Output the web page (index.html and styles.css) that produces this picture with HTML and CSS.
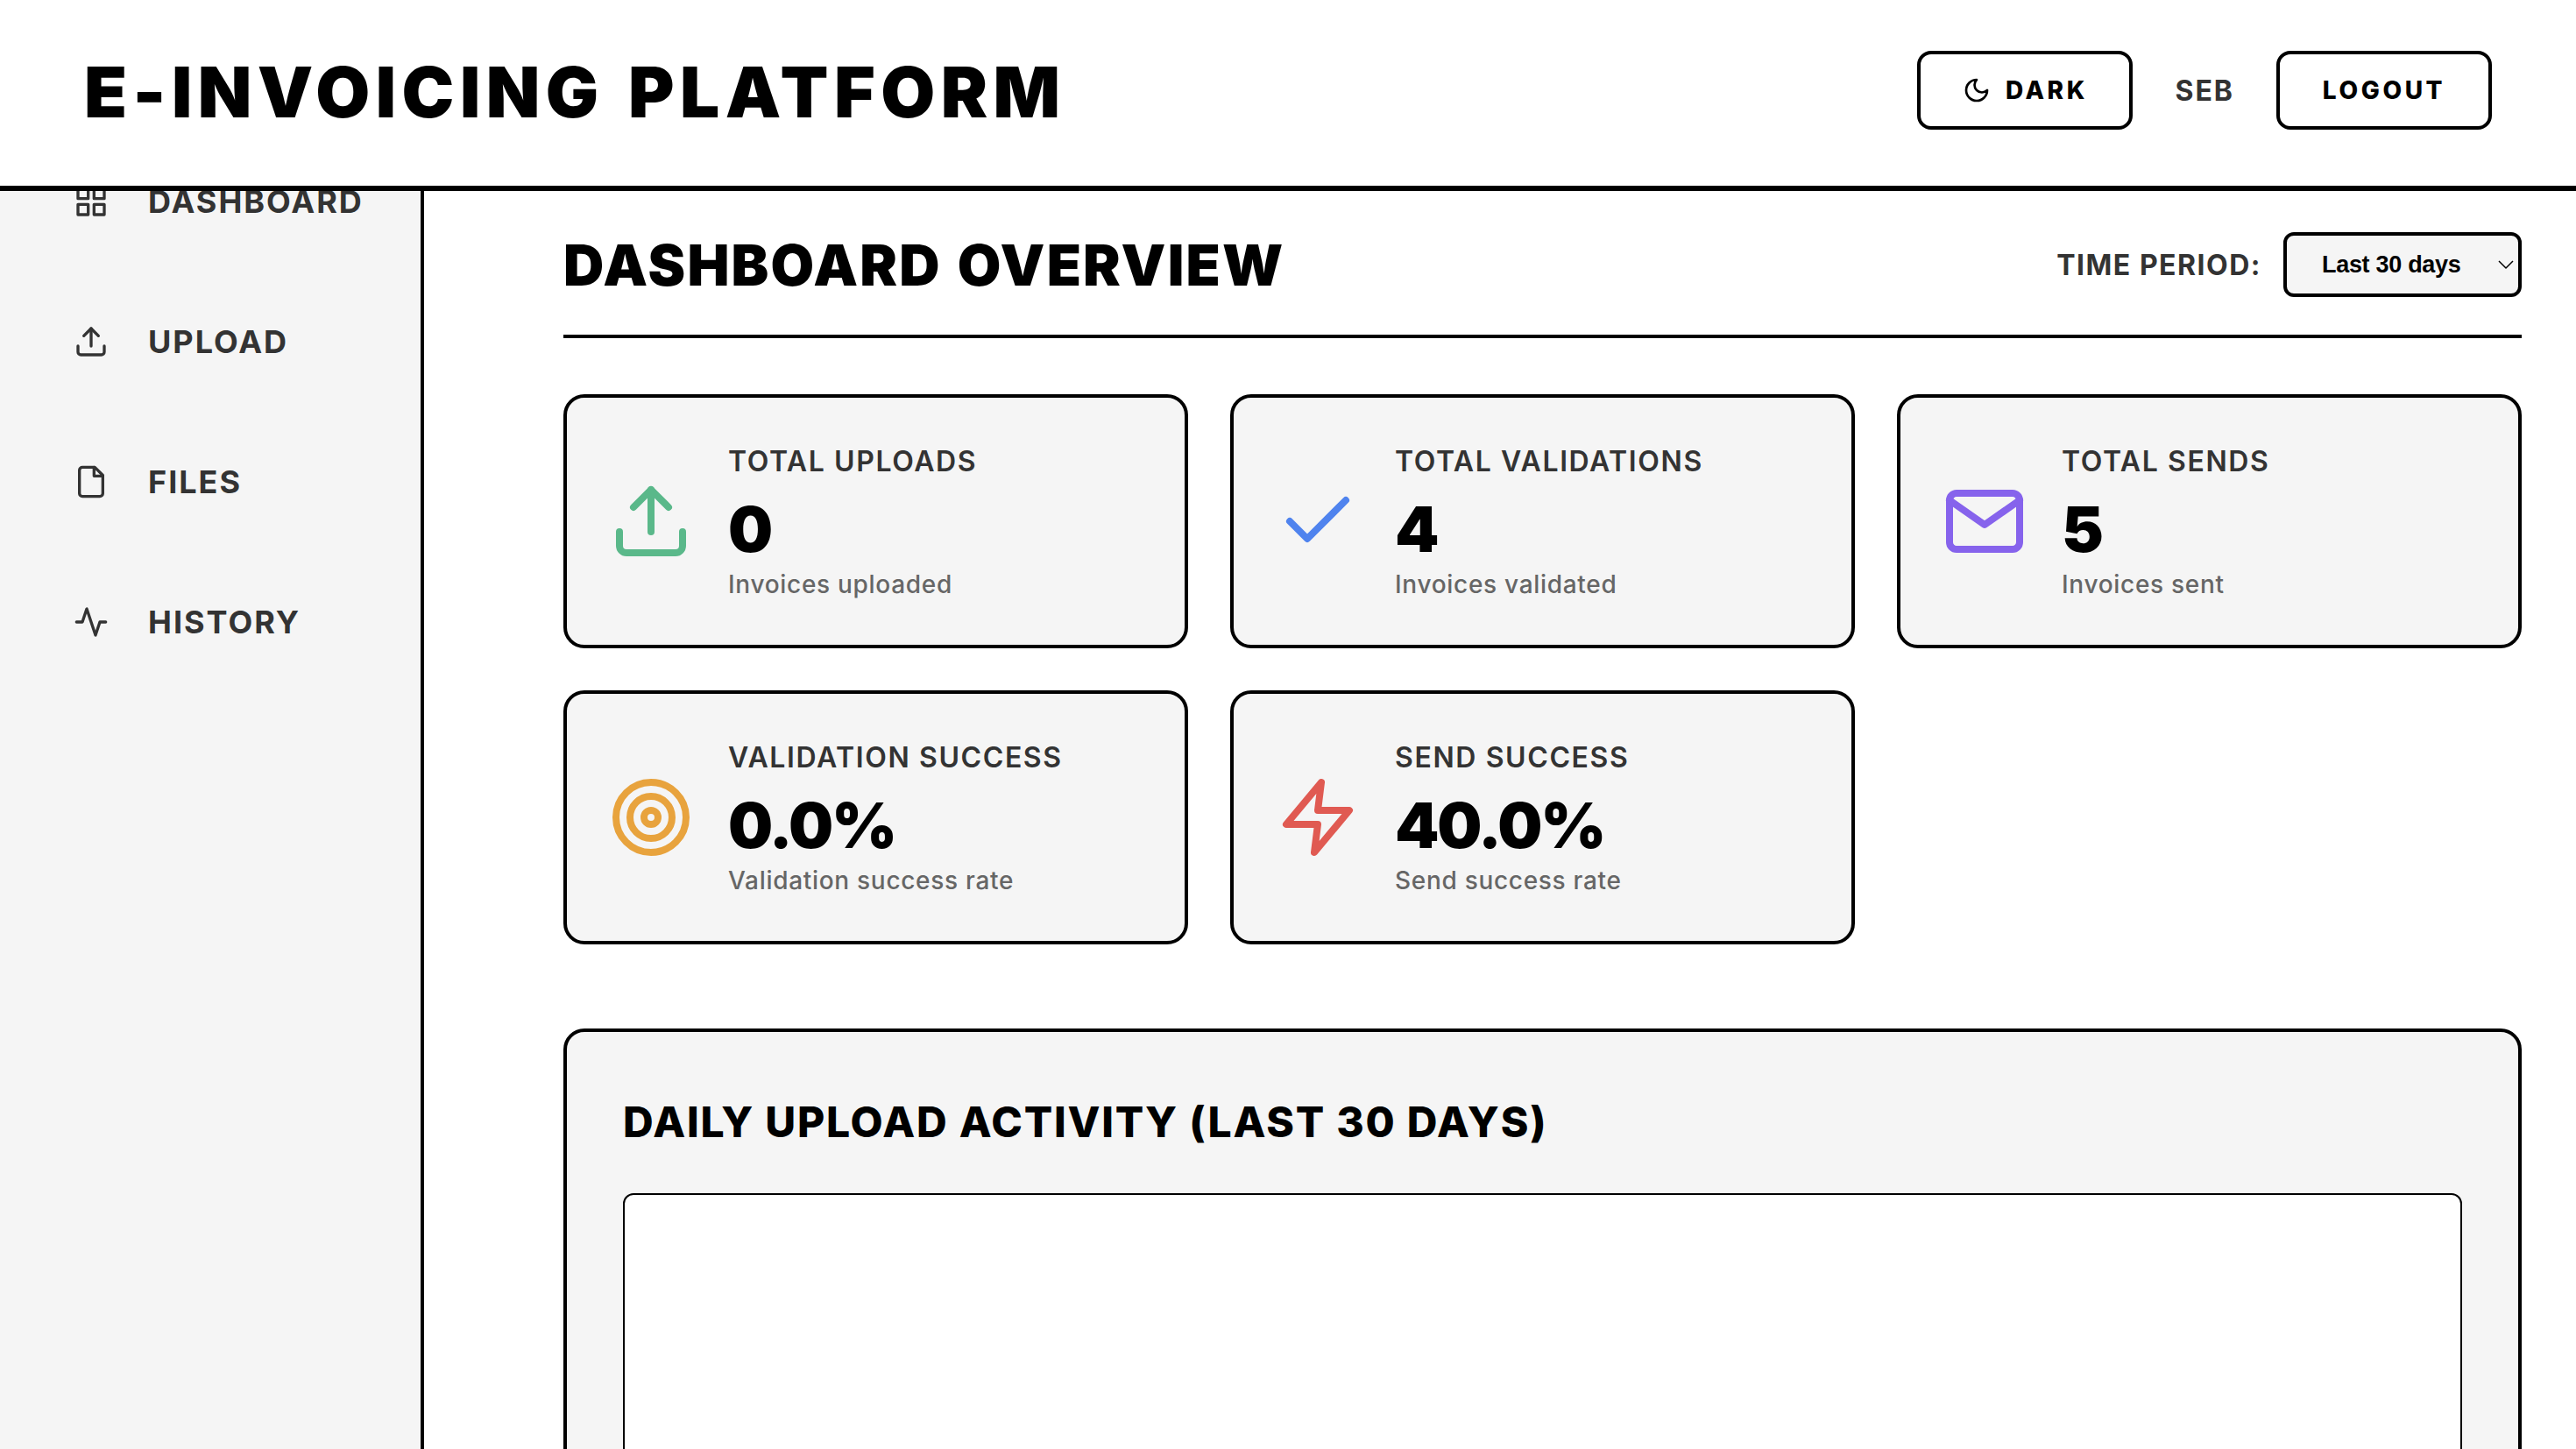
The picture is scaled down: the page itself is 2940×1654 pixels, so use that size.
FILE: index.html
```html
<!DOCTYPE html>
<html lang="en">
  <head>
    <meta charset="UTF-8" />
    <meta name="viewport" content="width=device-width, initial-scale=1.0" />
    <title>E-Invoicing Platform</title>
    <link rel="stylesheet" href="styles.css">
  </head>
  <body>
    <header class="topbar">
      <h1 class="brand">E-INVOICING PLATFORM</h1>
      <div class="topbar-actions">
        <button class="btn">
          <svg class="btn-icon" viewBox="0 0 24 24"><path d="M12 3a6 6 0 0 0 9 9 9 9 0 1 1-9-9Z" /></svg>
          DARK
        </button>
        <span class="user-name">SEB</span>
        <button class="btn">LOGOUT</button>
      </div>
    </header>

    <div class="layout">
      <aside class="sidebar">
        <nav class="nav">
          <a class="nav-item">
            <svg class="nav-icon" viewBox="0 0 24 24"><rect x="3" y="3" width="7" height="7" /><rect x="14" y="3" width="7" height="7" /><rect x="14" y="14" width="7" height="7" /><rect x="3" y="14" width="7" height="7" /></svg>
            DASHBOARD
          </a>
          <a class="nav-item">
            <svg class="nav-icon" viewBox="0 0 24 24"><path d="M21 15v4a2 2 0 0 1-2 2H5a2 2 0 0 1-2-2v-4" /><path d="M17 8l-5-5-5 5" /><path d="M12 3v12" /></svg>
            UPLOAD
          </a>
          <a class="nav-item">
            <svg class="nav-icon" viewBox="0 0 24 24"><path d="M14.5 2H6a2 2 0 0 0-2 2v16a2 2 0 0 0 2 2h12a2 2 0 0 0 2-2V7.5L14.5 2z" /><path d="M14 2v6h6" /></svg>
            FILES
          </a>
          <a class="nav-item">
            <svg class="nav-icon" viewBox="0 0 24 24"><path d="M22 12h-4l-3 9L9 3l-3 9H2" /></svg>
            HISTORY
          </a>
        </nav>
      </aside>

      <main class="content">
        <div class="page-head">
          <h2 class="page-title">DASHBOARD OVERVIEW</h2>
          <div class="period">
            <label class="period-label" for="period">TIME PERIOD:</label>
            <div class="select-wrap">
              <select class="period-select" id="period">
                <option>Last 30 days</option>
                <option>Last 7 days</option>
                <option>Last 90 days</option>
              </select>
              <svg class="select-arrow" viewBox="0 0 18 10"><path d="M1 1l8 8 8-8" /></svg>
            </div>
          </div>
        </div>

        <section class="stats">
          <div class="stat-card">
            <svg class="stat-icon green" viewBox="0 0 24 24"><path d="M21 15v4a2 2 0 0 1-2 2H5a2 2 0 0 1-2-2v-4" /><path d="M17 8l-5-5-5 5" /><path d="M12 3v12" /></svg>
            <div>
              <div class="stat-label">TOTAL UPLOADS</div>
              <div class="stat-value">0</div>
              <div class="stat-sub">Invoices uploaded</div>
            </div>
          </div>
          <div class="stat-card">
            <svg class="stat-icon blue" viewBox="0 0 24 24"><path d="M20 6 9 17l-5-5" /></svg>
            <div>
              <div class="stat-label">TOTAL VALIDATIONS</div>
              <div class="stat-value">4</div>
              <div class="stat-sub">Invoices validated</div>
            </div>
          </div>
          <div class="stat-card">
            <svg class="stat-icon purple" viewBox="0 0 24 24"><path d="M4 4h16c1.100 0 2 .9 2 2v12c0 1.100-.9 2-2 2H4c-1.100 0-2-.9-2-2V6c0-1.100.9-2 2-2z" /><path d="M22 6l-10 7L2 6" /></svg>
            <div>
              <div class="stat-label">TOTAL SENDS</div>
              <div class="stat-value">5</div>
              <div class="stat-sub">Invoices sent</div>
            </div>
          </div>
          <div class="stat-card">
            <svg class="stat-icon orange" viewBox="0 0 24 24"><circle cx="12" cy="12" r="10" /><circle cx="12" cy="12" r="6" /><circle cx="12" cy="12" r="2" /></svg>
            <div>
              <div class="stat-label">VALIDATION SUCCESS</div>
              <div class="stat-value">0.0%</div>
              <div class="stat-sub">Validation success rate</div>
            </div>
          </div>
          <div class="stat-card">
            <svg class="stat-icon red" viewBox="0 0 24 24"><path d="M13 2 3 14h9l-1 8 10-12h-9l1-8z" /></svg>
            <div>
              <div class="stat-label">SEND SUCCESS</div>
              <div class="stat-value">40.0%</div>
              <div class="stat-sub">Send success rate</div>
            </div>
          </div>
        </section>

        <section class="chart-panel">
          <h3 class="chart-title">DAILY UPLOAD ACTIVITY (LAST 30 DAYS)</h3>
          <div class="chart-box"></div>
        </section>
      </main>
    </div>
  </body>
</html>
```

FILE: styles.css
```css
* {
  box-sizing: border-box;
}
body {
  font-family: Inter, "Liberation Sans", sans-serif;
  margin: 0;
  height: 100vh;
  overflow: hidden;
  display: flex;
  flex-direction: column;
  background-color: #fff;
  color: #000;
}
svg {
  fill: none;
  stroke: currentColor;
  stroke-width: 2;
  stroke-linecap: round;
  stroke-linejoin: round;
  flex-shrink: 0;
}

/* top bar */
.topbar {
  height: 218px;
  flex-shrink: 0;
  display: flex;
  align-items: center;
  justify-content: space-between;
  padding: 0 96px 6px;
  border-bottom: 6px solid #000;
  background-color: #fff;
  position: relative;
  z-index: 1;
}
.brand {
  margin: 3px 0 0;
  font-size: 80px;
  font-weight: 900;
  letter-spacing: 6.5px;
  word-spacing: 5px;
  line-height: 1;
}
.topbar-actions {
  display: flex;
  align-items: center;
  gap: 48px;
}
.btn {
  height: 90px;
  width: 246px;
  display: flex;
  align-items: center;
  justify-content: center;
  gap: 17px;
  font-family: inherit;
  font-size: 28px;
  font-weight: 800;
  letter-spacing: 3.6px;
  color: #000;
  background-color: #fff;
  border: 4px solid #000;
  border-radius: 16px;
  padding: 0;
}
.btn-icon {
  width: 32px;
  height: 32px;
}
.user-name {
  font-size: 32px;
  font-weight: 700;
  letter-spacing: 2px;
  color: #333;
}

/* sidebar */
.layout {
  flex: 1;
  display: flex;
  min-height: 0;
}
.sidebar {
  width: 484px;
  flex-shrink: 0;
  background-color: #f5f5f5;
  border-right: 4px solid #000;
  overflow: hidden;
}
.nav {
  display: flex;
  flex-direction: column;
  margin-top: -68px;
}
.nav-item {
  height: 160px;
  display: flex;
  align-items: center;
  gap: 45px;
  padding-left: 84px;
  font-size: 36px;
  font-weight: 700;
  letter-spacing: 2px;
  color: #333;
}
.nav-icon {
  width: 40px;
  height: 40px;
}

/* main */
.content {
  flex: 1;
  min-width: 0;
  padding: 47px 62px 0 159px;
  overflow: hidden;
}
.page-head {
  display: flex;
  align-items: center;
  justify-content: space-between;
  padding-bottom: 43px;
  margin-bottom: 64px;
  border-bottom: 4px solid #000;
}
.page-title {
  margin: 2px 0 0;
  font-size: 64px;
  font-weight: 900;
  letter-spacing: 2.2px;
  word-spacing: 3px;
  line-height: 1.1;
}
.period {
  display: flex;
  align-items: center;
  gap: 25px;
}
.period-label {
  font-size: 32px;
  font-weight: 700;
  letter-spacing: 1.5px;
  color: #333;
}
.select-wrap {
  position: relative;
}
.period-select {
  display: block;
  width: 272px;
  height: 74px;
  padding: 0 0 0 40px;
  appearance: none;
  font-family: "Liberation Sans", Arial, sans-serif;
  font-size: 27px;
  font-weight: 700;
  letter-spacing: -0.3px;
  color: #000;
  background-color: #f5f5f5;
  border: 4px solid #000;
  border-radius: 12px;
}
.select-arrow {
  position: absolute;
  top: 32px;
  right: 9px;
  width: 18px;
  height: 10px;
  stroke-width: 1.5;
  stroke-linecap: butt;
  pointer-events: none;
}

/* stat cards */
.stats {
  display: grid;
  grid-template-columns: repeat(3, 1fr);
  gap: 48px;
  margin-bottom: 96px;
}
.stat-card {
  height: 290px;
  display: flex;
  align-items: center;
  gap: 40px;
  padding: 0 48px;
  background-color: #f5f5f5;
  border: 4px solid #000;
  border-radius: 24px;
}
.stat-icon {
  width: 96px;
  height: 96px;
}
.green {
  color: #5ab88a;
}
.blue {
  color: #4f83ee;
}
.purple {
  color: #8663ec;
}
.orange {
  color: #e8a33d;
}
.red {
  color: #e05a52;
}
.stat-label {
  font-size: 32px;
  font-weight: 600;
  letter-spacing: 1.6px;
  line-height: 48px;
  color: #333;
}
.stat-value {
  margin: 13px 0 2px;
  font-size: 72px;
  font-weight: 900;
  letter-spacing: -2.2px;
  line-height: 80px;
  color: #000;
}
.stat-sub {
  font-size: 28px;
  font-weight: 500;
  letter-spacing: 0.7px;
  line-height: 42px;
  color: #666;
}

/* chart */
.chart-panel {
  padding: 64px;
  background-color: #f5f5f5;
  border: 4px solid #000;
  border-radius: 24px;
}
.chart-title {
  margin: 0 0 43px;
  font-size: 48px;
  font-weight: 800;
  letter-spacing: 1.77px;
  line-height: 77px;
  color: #000;
}
.chart-box {
  height: 800px;
  background-color: #fff;
  border: 2px solid #000;
  border-radius: 12px;
}
```
